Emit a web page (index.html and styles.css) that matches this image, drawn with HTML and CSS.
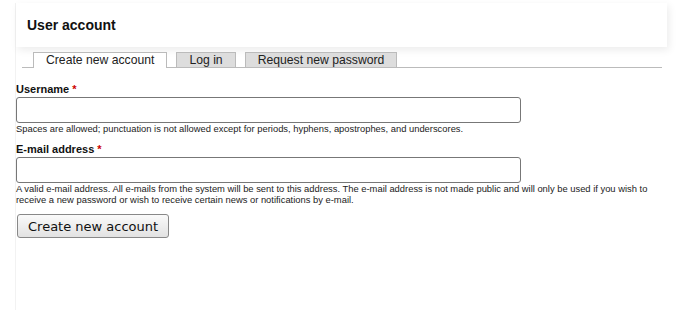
FILE: index.html
```html
<!DOCTYPE html>
<html>
<head>
<meta charset="utf-8">
<link rel="stylesheet" href="styles.css">
</head>
<body>
<div class="page">
  <div class="header"><h1 class="title">User account</h1></div>
  <ul class="tabs">
    <li class="tab active">Create new account</li>
    <li class="tab">Log in</li>
    <li class="tab">Request new password</li>
  </ul>
  <form class="form">
    <div class="field">
      <label class="label">Username <span class="req">*</span></label>
      <input class="input" type="text">
      <div class="desc">Spaces are allowed; punctuation is not allowed except for periods, hyphens, apostrophes, and underscores.</div>
    </div>
    <div class="field">
      <label class="label">E-mail address <span class="req">*</span></label>
      <input class="input" type="text">
      <div class="desc">A valid e-mail address. All e-mails from the system will be sent to this address. The e-mail address is not made public and will only be used if you wish to receive a new password or wish to receive certain news or notifications by e-mail.</div>
    </div>
    <button class="btn" type="button">Create new account</button>
  </form>
</div>
</body>
</html>
```
FILE: styles.css
```css
html, body { margin: 0; padding: 0; background: #fff; }
body { font-family: "Liberation Sans", Arial, sans-serif; color: #111; }
.page {
  margin-left: 15px;
  width: 652px;
  min-height: 310px;
  border-left: 1px solid #f2f2f2;
  box-sizing: border-box;
}
.header {
  margin-top: 3px;
  height: 44px;
  background: #fff;
  box-shadow: 2px 3px 8px rgba(0,0,0,0.08);
  display: flex;
  align-items: center;
  padding-left: 11px;
}
.title { margin: 0; font-size: 14px; font-weight: bold; color: #111; }
.tabs {
  list-style: none;
  margin: 5px 5px 0 6px;
  padding: 0 0 0 11px;
  display: flex;
  gap: 9px;
  border-bottom: 1px solid #bbb;
  height: 15px;
}
.tab {
  font-size: 12.2px;
  line-height: 14px;
  height: 14px;
  padding: 0 12px;
  border: 1px solid #bbb;
  border-bottom: none;
  background: #ddd;
  color: #222;
}
.tab.active { background: #fff; height: 15px; }
.form { padding: 15px 0 0 0; }
.field { margin-bottom: 9px; }
.label {
  display: block;
  font-size: 11px;
  font-weight: bold;
  line-height: 13px;
  margin-bottom: 1px;
}
.req { color: #c00; }
.input {
  display: block;
  box-sizing: border-box;
  width: 505px;
  height: 26px;
  border: 1px solid #777;
  border-radius: 3px;
  margin: 0;
  padding: 2px 4px;
}
.desc {
  font-size: 9.4px;
  line-height: 11px;
  margin-top: 0;
  color: #222;
  padding-right: 6px;
}
.btn {
  display: block;
  margin: 2px 0 0 1px;
  font-family: "DejaVu Sans", sans-serif;
  font-size: 13px;
  height: 24px;
  padding: 0 10px;
  border: 1px solid #888;
  border-radius: 3px;
  background: linear-gradient(#fafafa, #e2e2e2);
  color: #111;
}
```
